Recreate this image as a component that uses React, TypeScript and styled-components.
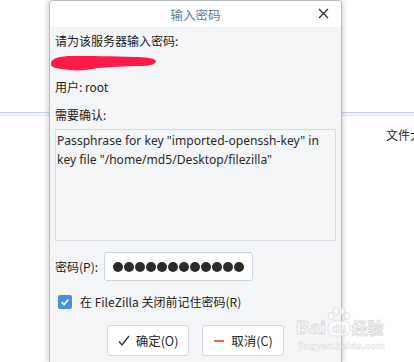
import React from "react";
import styled, { createGlobalStyle } from "styled-components";

const Global = createGlobalStyle`
  html, body {
    margin: 0;
    padding: 0;
    background: #ffffff;
    font-family: "Noto Sans", "Noto Sans CJK SC", sans-serif;
    overflow: hidden;
  }
`;

const Screen = styled.div`
  position: relative;
  width: 414px;
  height: 362px;
  overflow: hidden;
  background: #ffffff;
`;

const Backdrop = styled.div`
  display: flex;
  flex-direction: column;
  padding-top: 112px;
`;

const HeaderLine = styled.div`
  height: 2px;
  border-top: 1px solid #c9d3e3;
  border-bottom: 1px solid #e3e8f0;
  background: #f1f4f8;
`;

const ColumnHeader = styled.div`
  display: flex;
  align-items: flex-start;
  height: 32px;
  padding-left: 365px;
`;

const ColumnSep = styled.div`
  width: 1px;
  height: 26px;
  background: #e6e8eb;
  margin-top: 5px;
`;

const ColumnLabel = styled.span`
  margin-left: 21px;
  margin-top: 9px;
  font-size: 12px;
  line-height: 20px;
  color: #2b2b2b;
  white-space: nowrap;
  font-family: "Noto Sans CJK SC", sans-serif;
`;

const Dialog = styled.div`
  position: absolute;
  left: 49px;
  top: 0;
  width: 291px;
  height: 361px;
  background: #f4f5f7;
  border: 1px solid #b9bcc0;
  border-radius: 4px 4px 0 0;
  box-shadow: 0 0 6px rgba(0, 0, 0, 0.25);
  display: flex;
  flex-direction: column;
  font-size: 12px;
  color: #252525;
`;

const TitleBar = styled.div`
  height: 26px;
  background: #ffffff;
  display: flex;
  align-items: center;
  justify-content: center;
  position: relative;
  border-radius: 4px 4px 0 0;
`;

const Title = styled.span`
  font-family: "Noto Sans CJK SC", sans-serif;
  font-size: 12.5px;
  color: #6d7a8b;
`;

const Close = styled.svg`
  position: absolute;
  right: 12px;
  top: 7px;
`;

const Body = styled.div`
  display: flex;
  flex-direction: column;
  padding: 4px 5px 0 5px;
`;

const Label = styled.div<{ $mt?: number }>`
  font-family: "Noto Sans CJK SC", sans-serif;
  font-size: 12px;
  line-height: 20px;
  margin-top: ${(p) => p.$mt ?? 0}px;
  color: #222;
  white-space: nowrap;
`;

const Scribble = styled.svg`
  display: block;
  margin-top: 3px;
  margin-left: -5px;
`;

const Message = styled.div`
  margin-top: 4px;
  height: 112px;
  box-sizing: border-box;
  border: 1px solid #d9dbde;
  padding: 2px 1px;
  font-size: 12.1px;
  line-height: 18.5px;
  color: #2a2a2a;
`;

const FieldRow = styled.div`
  display: flex;
  align-items: center;
  gap: 6px;
  margin-top: 11px;
`;

const PasswordBox = styled.div`
  width: 149px;
  height: 29px;
  background: #ffffff;
  border: 1px solid #cdd5e1;
  border-radius: 3px;
  display: flex;
  align-items: center;
  gap: 0;
  padding-left: 8px;
  box-sizing: border-box;
`;

const Dot = styled.span`
  width: 10px;
  height: 10px;
  margin-right: 1px;
  border-radius: 50%;
  background: #2b2b2b;
`;

const CheckRow = styled.div`
  display: flex;
  align-items: center;
  gap: 8px;
  margin-top: 11px;
  margin-left: 3px;
`;

const Check = styled.span`
  width: 14px;
  height: 14px;
  border-radius: 2px;
  background: #4a8fdd;
  display: flex;
  align-items: center;
  justify-content: center;
`;

const Buttons = styled.div`
  display: flex;
  justify-content: center;
  gap: 13px;
  margin-top: 13px;
`;

const Button = styled.div`
  width: 82px;
  height: 31px;
  box-sizing: border-box;
  background: #ffffff;
  border: 1px solid #d6dbe2;
  border-radius: 3px;
  display: flex;
  align-items: center;
  justify-content: center;
  gap: 6px;
  font-family: "Noto Sans CJK SC", sans-serif;
  font-size: 12.5px;
  color: #262626;
`;

const Watermark = styled.div`
  position: absolute;
  left: 296px;
  top: 307px;
  display: flex;
  flex-direction: column;
  pointer-events: none;
`;

const WmTop = styled.div`
  display: flex;
  align-items: flex-end;
  height: 30px;
`;

const WmWord = styled.span<{ $size: number }>`
  font-family: "Liberation Sans", "Noto Sans CJK SC", sans-serif;
  font-size: ${(p) => p.$size}px;
  font-weight: bold;
  line-height: 1;
  color: rgba(255, 255, 255, 0.6);
  -webkit-text-stroke: 0.8px #d9d9d9;
`;

const WmBottom = styled.div`
  font-family: "Liberation Sans", sans-serif;
  font-size: 9.5px;
  font-weight: bold;
  color: rgba(255, 255, 255, 0.5);
  -webkit-text-stroke: 0.5px #dedede;
  margin-top: 3px;
  margin-left: 2px;
  letter-spacing: 0.2px;
`;

export default function App() {
  return (
    <Screen>
      <Global />
      <Backdrop>
        <HeaderLine />
        <ColumnHeader>
          <ColumnSep />
          <ColumnLabel>文件大小</ColumnLabel>
        </ColumnHeader>
      </Backdrop>

      <Dialog>
        <TitleBar>
          <Title>输入密码</Title>
          <Close width="11" height="11" viewBox="0 0 11 11">
            <path d="M1 1 L10 10 M10 1 L1 10" stroke="#333" strokeWidth="1.3" />
          </Close>
        </TitleBar>
        <Body>
          <Label>请为该服务器输入密码:</Label>
          <Scribble width="108" height="18" viewBox="0 0 108 18">
            <path
              d="M1 9 C2 4 10 2 22 2 C40 2 62 2 84 3 C96 3 104 4 106 7 C106 10 100 12 90 12 C74 12 60 13 48 14 C38 16 28 17 20 16 C10 15 2 14 1 11 Z"
              fill="#ff1a48"
            />
          </Scribble>
          <Label $mt={5}>用户: root</Label>
          <Label $mt={8}>需要确认:</Label>
          <Message>
            Passphrase for key "imported-openssh-key" in key file "/home/md5/Desktop/filezilla"
          </Message>
          <FieldRow>
            <Label>密码(P):</Label>
            <PasswordBox>
              {Array.from({ length: 12 }).map((_, i) => (
                <Dot key={i} />
              ))}
            </PasswordBox>
          </FieldRow>
          <CheckRow>
            <Check>
              <svg width="10" height="10" viewBox="0 0 10 10">
                <path d="M1.5 5.2 L4 7.5 L8.5 2.5" stroke="#fff" strokeWidth="1.8" fill="none" />
              </svg>
            </Check>
            <Label>在 FileZilla 关闭前记住密码(R)</Label>
          </CheckRow>
          <Buttons>
            <Button>
              <svg width="12" height="12" viewBox="0 0 12 12">
                <path d="M1 6.5 L4 10 L11 1" stroke="#333" strokeWidth="1.3" fill="none" />
              </svg>
              确定(O)
            </Button>
            <Button>
              <svg width="12" height="12" viewBox="0 0 12 12">
                <rect x="1" y="5" width="10" height="2" fill="#e8675a" />
              </svg>
              取消(C)
            </Button>
          </Buttons>
        </Body>
      </Dialog>

      <Watermark>
        <WmTop>
          <WmWord $size={19}>Bai</WmWord>
          <svg width="26" height="30" viewBox="0 0 26 30">
            <g fill="rgba(255,255,255,0.6)" stroke="#d9d9d9" strokeWidth="0.8">
              <ellipse cx="5" cy="9" rx="3" ry="3.5" />
              <ellipse cx="10" cy="4" rx="3" ry="3.5" />
              <ellipse cx="16" cy="4" rx="3" ry="3.5" />
              <ellipse cx="21" cy="9" rx="3" ry="3.5" />
              <rect x="2" y="14" width="22" height="15" rx="7" />
            </g>
            <text
              x="13"
              y="26"
              textAnchor="middle"
              fontFamily="Liberation Sans, sans-serif"
              fontWeight="bold"
              fontSize="12"
              fill="rgba(255,255,255,0.6)"
              stroke="#d9d9d9"
              strokeWidth="0.6"
            >
              du
            </text>
          </svg>
          <WmWord $size={16}>经验</WmWord>
        </WmTop>
        <WmBottom>jingyan.baidu.com</WmBottom>
      </Watermark>
    </Screen>
  );
}
